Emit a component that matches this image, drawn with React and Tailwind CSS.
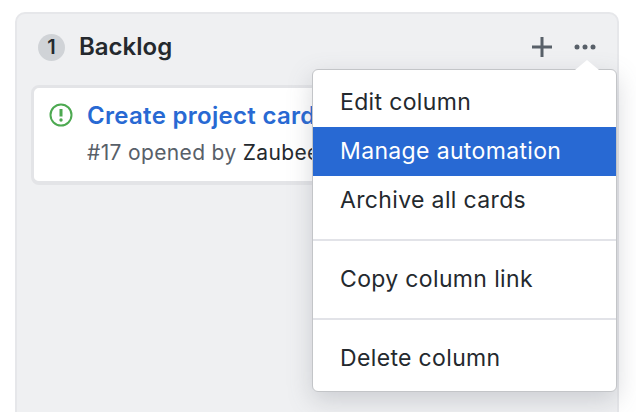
import React from "react";

const font = { fontFamily: "Inter, 'Liberation Sans', sans-serif" };

function MenuItem({ label, active }) {
  return (
    <div className={`h-[49px] flex items-center pl-[27px] text-[23px] tracking-[0.35px] ${active ? "bg-[#2869d3] text-white" : "text-[#24292e]"}`}>
      {label}
    </div>
  );
}

const Divider = () => <div className="h-[2px] my-[14px] bg-[#e2e3e8]" />;

export default function App() {
  return (
    <div className="relative w-[636px] h-[412px] overflow-hidden bg-white font-['Inter',sans-serif]">
      <div className="pt-3 pl-[15px] pr-[17px]">
        <div className="h-[420px] rounded-t-[10px] border-2 border-[#e6e7ea] bg-[#eff0f2] pl-[14px] pr-[15px]">
          <div className="h-[71px] pb-[5px] flex items-center">
            <div className="w-[27px] h-[27px] ml-[7px] rounded-full bg-[#d0d3d7] text-[#24292e] text-[20px] font-semibold flex items-center justify-center">
              1
            </div>
            <div className="ml-[14px] text-[24px] font-semibold text-[#24292e]">Backlog</div>
            <div className="ml-auto mr-[6px] flex items-center gap-[22px]">
              <svg width="20" height="20" viewBox="0 0 20 20" fill="none">
                <path d="M10 0v20M0 10h20" stroke="#586069" strokeWidth="3" />
              </svg>
              <svg width="22" height="6" viewBox="0 0 22 6" fill="#586069">
                <circle cx="3" cy="3" r="2.5" />
                <circle cx="11" cy="3" r="2.5" />
                <circle cx="19" cy="3" r="2.5" />
              </svg>
            </div>
          </div>
          <div className="h-[100px] rounded-[8px] border-x-[3px] border-t-[3px] border-b-4 border-[#e3e4e7] bg-white flex pl-[15px] pt-[14px] whitespace-nowrap overflow-hidden">
            <svg className="mt-[1px] shrink-0" width="24" height="24" viewBox="0 0 24 24" fill="none">
              <circle cx="12" cy="12" r="10.5" stroke="#4da951" strokeWidth="2" />
              <path d="M12 6v7.5" stroke="#4da951" strokeWidth="3" />
              <circle cx="12" cy="17" r="1.7" fill="#4da951" />
            </svg>
            <div className="ml-[14px]">
              <div className="text-[24px] leading-[28px] font-semibold tracking-[0.3px] text-[#2869d3]">Create project card</div>
              <div className="mt-[11px] text-[21px] leading-[24px] tracking-[0.35px] text-[#586069]">
                #17 opened by <span className="text-[#24292e]">Zaubeerer</span>
              </div>
            </div>
          </div>
        </div>
      </div>

      {/* dropdown */}
      <div className="absolute left-[312px] top-[69px] w-[305px] h-[323px] rounded-[6px] border-[1.5px] border-[#c3c5c8] bg-white py-2 shadow-[0_8px_24px_rgba(100,105,115,0.25)]" style={font}>
        <div className="absolute -top-[10px] left-[262px] w-0 h-0 border-x-[12px] border-x-transparent border-b-[10px] border-b-white" />
        <MenuItem label="Edit column" />
        <MenuItem label="Manage automation" active />
        <MenuItem label="Archive all cards" />
        <Divider />
        <MenuItem label="Copy column link" />
        <Divider />
        <MenuItem label="Delete column" />
      </div>
    </div>
  );
}
